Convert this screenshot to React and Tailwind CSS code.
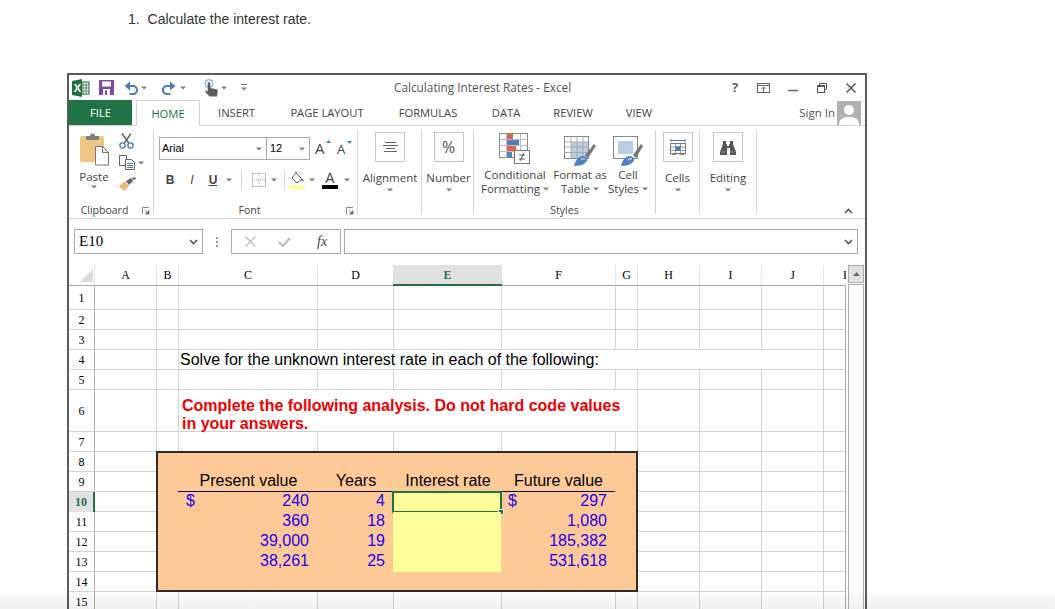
import React from 'react';

const columns = ['A', 'B', 'C', 'D', 'E', 'F', 'G', 'H', 'I', 'J'];
const rows = [1, 2, 3, 4, 5, 6, 7, 8, 9, 10, 11, 12, 13, 14, 15];

const tableRows = [
  { present: '240', years: '4', future: '297', dollar: true },
  { present: '360', years: '18', future: '1,080' },
  { present: '39,000', years: '19', future: '185,382' },
  { present: '38,261', years: '25', future: '531,618' },
];

// cells covered by the merged areas and the orange box (col 0 is A)
const isCovered = (row, col) => {
  if (row === 4 && col >= 2 && col <= 9) return true;
  if (row === 6 && col >= 2 && col <= 6) return true;
  if (row >= 8 && row <= 14 && col >= 1 && col <= 6) return true;
  return false;
};

const Caret = ({ className = '' }) => (
  <svg width="6" height="4" viewBox="0 0 6 4" className={className}>
    <path d="M0 0.500h6L3 3.500z" fill="#808080" />
  </svg>
);

const Launcher = () => (
  <svg width="8" height="8" viewBox="0 0 8 8">
    <path d="M0.500 7V0.500H7" fill="none" stroke="#888" />
    <path d="M3 3l3 3M7 3.500V7H3.500z" fill="#666" stroke="#666" strokeWidth="0.7" />
  </svg>
);

const ExcelLogo = () => (
  <svg width="18" height="18" viewBox="0 0 18 18">
    <rect x="8" y="3" width="9" height="12" fill="#fff" stroke="#1d7044" />
    <path d="M11 3v12M14 3v12M8 6h9M8 9h9M8 12h9" stroke="#1d7044" strokeWidth="0.8" />
    <path d="M0 2l10-2v18L0 16z" fill="#1d7044" />
    <text x="1.800" y="13" fontSize="11" fontWeight="700" fill="#fff" fontFamily="Liberation Sans, sans-serif">X</text>
  </svg>
);

const SaveIcon = () => (
  <svg width="15" height="15" viewBox="0 0 15 15">
    <rect width="15" height="15" fill="#7f4ea3" />
    <rect x="3" y="1.500" width="9" height="5" fill="#fff" />
    <rect x="4" y="9" width="7" height="6" fill="#fff" />
    <rect x="6" y="10.500" width="2" height="4.500" fill="#7f4ea3" />
  </svg>
);

const UndoIcon = ({ flip = false }) => (
  <svg width="15" height="14" viewBox="0 0 15 14" className={flip ? '-scale-x-100' : ''}>
    <path d="M3 5h6a4 4 0 0 1 0 8H5.500" fill="none" stroke="#4a7fb5" strokeWidth="2.200" />
    <path d="M6 0.500L0.500 5l5.500 4.500z" fill="#4a7fb5" />
  </svg>
);

const TouchIcon = () => (
  <svg width="14" height="18" viewBox="0 0 14 18">
    <circle cx="5" cy="4.500" r="3.800" fill="none" stroke="#8fb4d8" strokeWidth="1.400" />
    <path d="M3.700 4.500a1.300 1.300 0 0 1 2.600 0V9l6 1.200c1 .3 1.500 1 1.400 2l-.6 5.300H5.500L1 12.500l1-1 1.700 1.200z" fill="#5c5c5c" />
  </svg>
);

const PasteIcon = () => (
  <svg width="29" height="33" viewBox="0 0 29 33">
    <path d="M2 3h20a2 2 0 0 1 2 2v24H2a2 2 0 0 1-2-2V5a2 2 0 0 1 2-2z" fill="#ecc583" />
    <path d="M6 3h4a2.500 2.500 0 0 1 5 0h4v4H6z" fill="#7f7f7f" />
    <path d="M15.500 13.500h7l6 6v12.500h-13z" fill="#fff" stroke="#777" />
    <path d="M22.500 13.500v6h6" fill="none" stroke="#777" />
  </svg>
);

const ScissorsIcon = () => (
  <svg width="15" height="16" viewBox="0 0 15 16">
    <path d="M3 0.500l7 10M12 0.500l-7 10" stroke="#666" strokeWidth="1.500" />
    <circle cx="3.500" cy="12.500" r="2.600" fill="none" stroke="#4a7fb5" strokeWidth="1.400" />
    <circle cx="11.500" cy="12.500" r="2.600" fill="none" stroke="#4a7fb5" strokeWidth="1.400" />
  </svg>
);

const CopyIcon = () => (
  <svg width="16" height="15" viewBox="0 0 16 15">
    <path d="M0.500 0.500h7v10h-7z" fill="#fff" stroke="#666" />
    <path d="M6.500 4.500h6l3 3v7h-9z" fill="#fff" stroke="#666" />
    <path d="M8 8.500h6M8 10.500h6M8 12.500h6" stroke="#4a7fb5" />
  </svg>
);

const PainterIcon = () => (
  <svg width="17" height="14" viewBox="0 0 17 14">
    <path d="M0 9l6-5 4 5-5 5z" fill="#e9b872" />
    <path d="M7 4l5-3 2 3-4 4z" fill="#666" />
    <path d="M13 1l3-1 1 2-3 1z" fill="#666" />
  </svg>
);

const AlignIcon = () => (
  <svg width="15" height="11" viewBox="0 0 15 11">
    <path d="M2 0.500h11M0 3.500h15M3 6.500h9M1 9.500h13" stroke="#666" />
  </svg>
);

const CellsIcon = () => (
  <svg width="16" height="18" viewBox="0 0 16 18">
    <path d="M1 1v3M15 1v3M1 2.500h14" stroke="#4a7fb5" />
    <rect x="0.500" y="5.500" width="15" height="10" fill="#fff" stroke="#777" />
    <path d="M5.500 5.500v10M10.500 5.500v10M0.500 9h15M0.500 12.500h15" stroke="#999" />
    <rect x="5.500" y="8.500" width="5" height="4" fill="#3f76b5" />
    <path d="M1.500 16.500h5M9.500 16.500h5" stroke="#888" />
  </svg>
);

const BinocularsIcon = () => (
  <svg width="16" height="15" viewBox="0 0 16 15">
    <path d="M3 1h3v3h1v2h2V4h1V1h3v3l3 8v3h-6V8H7v7H0v-3l3-8z" fill="#555" />
    <path d="M1.500 12h4M10.500 12h4" stroke="#999" />
  </svg>
);

const CondFormatIcon = () => (
  <svg width="32" height="33" viewBox="0 0 32 33">
    <rect x="0.500" y="0.500" width="28" height="24" fill="#fff" stroke="#888" />
    <path d="M0.500 6.500h28M0.500 12.500h28M0.500 18.500h28M7.500 0.500v24M21.500 0.500v24" stroke="#bbb" />
    <rect x="8" y="1" width="6" height="5" fill="#e0654a" />
    <rect x="8" y="7" width="12" height="5" fill="#4f81bd" />
    <rect x="8" y="13" width="9" height="5" fill="#e0654a" />
    <rect x="8" y="19" width="5" height="5" fill="#4f81bd" />
    <rect x="15.500" y="17.500" width="15" height="13" fill="#fff" stroke="#777" />
    <path d="M20 22h6M20 26h6M25 20l-4 8" stroke="#444" strokeWidth="0.900" />
  </svg>
);

const TableStyleIcon = () => (
  <svg width="32" height="33" viewBox="0 0 32 33">
    <rect x="0.500" y="3.500" width="24" height="22" fill="#fff" stroke="#888" />
    <rect x="7" y="9" width="17" height="16" fill="#b8cce4" />
    <path d="M0.500 9h24M0.500 14h24M0.500 19.500h24M7 3.500v22M13 3.500v22M19 3.500v22" stroke="#aaa" />
    <path d="M21 22L30 11l2 2-8 12z" fill="#777" />
    <path d="M10 33c1-6 5-10 10-10 3 0 4 4 2 6-3 3-7 4-12 4z" fill="#4f81bd" />
    <path d="M17 27a3 3 0 0 1 4-1" fill="none" stroke="#fff" />
  </svg>
);

const CellStyleIcon = () => (
  <svg width="30" height="33" viewBox="0 0 30 33">
    <rect x="0.500" y="3.500" width="24" height="22" fill="#fff" stroke="#888" />
    <rect x="5" y="8" width="15" height="13" fill="#b8cce4" />
    <path d="M20 22L28 11l2 2-7 12z" fill="#777" />
    <path d="M8 33c1-6 5-10 9-10 4 0 5 4 3 6-3 3-7 4-12 4z" fill="#4f81bd" />
    <path d="M15 27a3 3 0 0 1 4-1" fill="none" stroke="#fff" />
  </svg>
);

const Chevron = () => (
  <svg width="9" height="6" viewBox="0 0 9 6">
    <path d="M1 1l3.500 3.500L8 1" fill="none" stroke="#555" strokeWidth="1.600" />
  </svg>
);

const Group = ({ label, launcher, className = '', labelClass = '', children }) => (
  <div className={`relative mt-[4px] flex h-[84px] flex-col border-r border-[#d4d4d4] ${className}`}>
    <div className="h-[72px]">{children}</div>
    <div className={`h-[12px] whitespace-nowrap text-center text-[10.5px] leading-[16px] ${labelClass}`}>{label}</div>
    {launcher && (
      <div className="absolute bottom-[-1px] right-[3px]">
        <Launcher />
      </div>
    )}
  </div>
);

const BoxGroup = ({ label, icon, className }) => (
  <Group className={className}>
    <div className="flex flex-col items-center pt-[2px]">
      <div className="flex h-[30px] w-[30px] items-center justify-center border border-[#c6c6c6]">{icon}</div>
      <div className="mt-[9px] whitespace-nowrap text-[11.5px] leading-[14px]">{label}</div>
      <Caret className="mt-[3px]" />
    </div>
  </Group>
);

const StyleColumn = ({ className, icon, top, bottom }) => (
  <div className={`flex flex-col items-center pt-[3px] ${className}`}>
    <div className="h-[33px]">{icon}</div>
    <div className="mt-[2px] whitespace-nowrap text-[11.5px] leading-[14px]">{top}</div>
    <div className="flex items-center gap-[3px] whitespace-nowrap text-[11.5px] leading-[14px]">
      {bottom}
      <Caret />
    </div>
  </div>
);

const TitleBar = () => (
  <div className="flex h-[25px] items-center text-[#555]">
    <div className="flex w-[325px] items-center">
      <div className="ml-[3px] w-[27px]"><ExcelLogo /></div>
      <div className="w-[25px]"><SaveIcon /></div>
      <div className="w-[17px]"><UndoIcon /></div>
      <Caret className="mr-[14px]" />
      <div className="w-[19px]"><UndoIcon flip /></div>
      <Caret className="mr-[18px]" />
      <div className="w-[17px]"><TouchIcon /></div>
      <Caret className="mr-[14px]" />
      <div className="flex flex-col items-center gap-[2px]">
        <div className="h-px w-[6px] bg-[#777]" />
        <Caret />
      </div>
    </div>
    <div className="text-[11.8px]">Calculating Interest Rates - Excel</div>
    <div className="ml-auto flex items-center pr-[9px]">
      <span className="w-[28px] text-center text-[13px] font-bold text-[#666]">?</span>
      <svg width="13" height="10" viewBox="0 0 13 10" className="ml-[8px]">
        <rect x="0.500" y="0.500" width="12" height="9" fill="none" stroke="#666" />
        <path d="M1 2.500h11" stroke="#666" />
        <path d="M6.500 9V4M4.500 6l2-2 2 2" fill="none" stroke="#666" />
      </svg>
      <svg width="10" height="10" viewBox="0 0 10 10" className="ml-[18px]">
        <path d="M0 7.500h10" stroke="#666" strokeWidth="1.500" />
      </svg>
      <svg width="10" height="10" viewBox="0 0 10 10" className="ml-[19px]">
        <path d="M2.500 2.500V0.500h7v6H7.500" fill="none" stroke="#555" />
        <rect x="0.500" y="2.500" width="7" height="7" fill="none" stroke="#555" />
        <path d="M0.500 3.500h7" stroke="#555" />
      </svg>
      <svg width="10" height="10" viewBox="0 0 10 10" className="ml-[19px]">
        <path d="M0.500 0.500l9 9M9.500 0.500l-9 9" stroke="#555" strokeWidth="1.500" />
      </svg>
    </div>
  </div>
);

const TabBar = () => (
  <div className="flex h-[26px] items-stretch border-b border-[#d4d4d4] text-[11.2px] text-[#444]">
    <div className="flex w-[63px] items-center justify-center bg-[#217346] pt-px text-white">FILE</div>
    <div className="z-10 ml-[4px] flex h-[26px] w-[64px] items-center justify-center border border-b-0 border-[#d4d4d4] bg-white pt-px text-[#217346]">
      HOME
    </div>
    <div className="flex w-[73px] items-center justify-center pt-px">INSERT</div>
    <div className="flex w-[108px] items-center justify-center pt-px">PAGE LAYOUT</div>
    <div className="flex w-[94px] items-center justify-center pt-px">FORMULAS</div>
    <div className="flex w-[62px] items-center justify-center pt-px">DATA</div>
    <div className="flex w-[72px] items-center justify-center pt-px">REVIEW</div>
    <div className="flex w-[60px] items-center justify-center pt-px">VIEW</div>
    <div className="ml-auto mr-[4px] flex items-center gap-[2px]">
      <span className="text-[11.5px] text-[#555]">Sign In</span>
      <svg width="24" height="24" viewBox="0 0 24 24">
        <rect width="24" height="24" fill="#b1b1b1" />
        <circle cx="12" cy="9" r="5" fill="#fff" />
        <path d="M2 24c0-6 4-8 10-8s10 2 10 8z" fill="#fff" />
      </svg>
    </div>
  </div>
);

const Ribbon = () => (
  <div className="flex h-[93px] border-b border-[#d4d4d4] text-[#444]">
    <Group label="Clipboard" launcher className="w-[85px]" labelClass="pr-[13px]">
      <div className="flex">
        <div className="ml-[6px] flex w-[38px] flex-col items-center pt-[3px]">
          <PasteIcon />
          <div className="mt-[4px] text-[11.5px] leading-[14px]">Paste</div>
          <Caret className="mt-[1px]" />
        </div>
        <div className="ml-[6px] flex flex-col items-start pt-[3px]">
          <ScissorsIcon />
          <div className="mt-[6px] flex items-center gap-[3px]">
            <CopyIcon />
            <Caret />
          </div>
          <div className="mt-[7px]"><PainterIcon /></div>
        </div>
      </div>
    </Group>

    <Group label="Font" launcher className="w-[204px]" labelClass="pr-[12px]">
      <div className="flex items-center pl-[5px] pt-[7px]">
        <div className="flex h-[23px] w-[108px] items-center justify-between border border-[#ababab] pl-[2px] pr-[4px] font-['Liberation_Sans',sans-serif] text-[11px] text-black">
          Arial
          <Caret />
        </div>
        <div className="-ml-px flex h-[23px] w-[44px] items-center justify-between border border-[#ababab] pl-[3px] pr-[4px] font-['Liberation_Sans',sans-serif] text-[11px] text-black">
          12
          <Caret />
        </div>
        <div className="relative ml-[5px] w-[16px] text-[15px] leading-none">
          A
          <svg width="5" height="3" viewBox="0 0 5 3" className="absolute right-[0px] top-[-1px]"><path d="M0 3h5L2.500 0z" fill="#4a7fb5" /></svg>
        </div>
        <div className="relative ml-[6px] mt-[2px] w-[13px] text-[13px] leading-none">
          A
          <svg width="5" height="3" viewBox="0 0 5 3" className="absolute right-[-2px] top-[-2px]"><path d="M0 0h5L2.500 3z" fill="#4a7fb5" /></svg>
        </div>
      </div>
      <div className="mt-[10px] flex h-[20px] items-center pl-[5px] font-['Liberation_Sans',sans-serif] text-[12px]">
        <span className="w-[22px] text-center font-bold">B</span>
        <span className="w-[22px] text-center italic">I</span>
        <span className="w-[20px] text-center font-bold underline">U</span>
        <div className="flex w-[12px] justify-center"><Caret /></div>
        <div className="flex w-[12px] justify-center"><div className="h-[20px] w-px bg-[#d4d4d4]" /></div>
        <div className="ml-[2px] flex w-[20px] justify-center">
          <svg width="14" height="14" viewBox="0 0 14 14">
            <rect x="0.500" y="0.500" width="13" height="13" fill="none" stroke="#888" strokeDasharray="1 1" />
            <path d="M7 0v14M0 7h14" stroke="#aaa" strokeDasharray="1 1" />
          </svg>
        </div>
        <div className="flex w-[10px] justify-center"><Caret /></div>
        <div className="flex w-[10px] justify-center"><div className="h-[20px] w-px bg-[#d4d4d4]" /></div>
        <div className="w-[16px]">
          <svg width="16" height="19" viewBox="0 0 16 19">
            <path d="M7 2l6 6-5 4-5-5z" fill="#fff" stroke="#666" />
            <path d="M7 2V0" stroke="#666" />
            <path d="M13 7l2 3-3 0z" fill="#4a7fb5" />
            <rect y="14" width="16" height="4" fill="#ffff99" />
          </svg>
        </div>
        <div className="flex w-[14px] justify-center"><Caret /></div>
        <div className="ml-[3px] flex w-[16px] flex-col items-center">
          <span className="text-[14px] leading-[14px]">A</span>
          <div className="h-[4px] w-[16px] bg-black" />
        </div>
        <div className="flex w-[18px] justify-center"><Caret /></div>
      </div>
    </Group>

    <BoxGroup label="Alignment" icon={<AlignIcon />} className="w-[64px] pl-px" />
    <BoxGroup label="Number" icon={<span className="text-[16px] text-[#555]">%</span>} className="w-[52px] pl-[2px]" />

    <Group label="Styles" className="w-[182px]">
      <div className="flex pl-[3px]">
        <StyleColumn className="w-[76px]" icon={<CondFormatIcon />} top="Conditional" bottom="Formatting" />
        <StyleColumn className="w-[54px]" icon={<TableStyleIcon />} top="Format as" bottom="Table" />
        <StyleColumn className="w-[42px]" icon={<CellStyleIcon />} top="Cell" bottom="Styles" />
      </div>
    </Group>

    <BoxGroup label="Cells" icon={<CellsIcon />} className="w-[44px]" />
    <BoxGroup label="Editing" icon={<BinocularsIcon />} className="w-[57px]" />

    <div className="flex flex-1 items-end justify-end pb-[4px] pr-[12px]">
      <div className="rotate-180"><Chevron /></div>
    </div>
  </div>
);

const FormulaBar = () => (
  <div className="flex h-[46px] items-start pl-[5px] pt-[10px]">
    <div className="flex h-[25px] w-[129px] items-center justify-between border border-[#ababab] pl-[4px] pr-[4px] font-['Liberation_Serif',serif] text-[15px] text-black">
      E10
      <Chevron />
    </div>
    <div className="flex h-[25px] w-[28px] flex-col items-center justify-center gap-[2px]">
      <div className="h-[2px] w-[2px] bg-[#999]" />
      <div className="h-[2px] w-[2px] bg-[#999]" />
      <div className="h-[2px] w-[2px] bg-[#999]" />
    </div>
    <div className="flex h-[25px] w-[110px] items-center border border-[#ababab]">
      <svg width="11" height="11" viewBox="0 0 11 11" className="ml-[13px]">
        <path d="M0.500 0.500l10 10M10.500 0.500l-10 10" stroke="#bbb" strokeWidth="1.300" />
      </svg>
      <svg width="13" height="10" viewBox="0 0 13 10" className="ml-[22px]">
        <path d="M1 5l4 4 7-8" fill="none" stroke="#bbb" strokeWidth="2" />
      </svg>
      <span className="ml-[26px] font-['Liberation_Serif',serif] text-[14px] italic text-[#444]">fx</span>
    </div>
    <div className="ml-[3px] flex h-[25px] w-[514px] items-center justify-end border border-[#ababab] pr-[4px]">
      <Chevron />
    </div>
  </div>
);

const OrangeBox = () => (
  <div className="z-10 col-start-3 col-end-9 row-start-9 row-end-16 -ml-px -mt-px flex flex-col border-2 border-[#2b2b2b] bg-[#fdca97] pl-[20px] pt-[18px] font-['Liberation_Sans',sans-serif] text-[16px] leading-[18px]">
    <div className="flex h-[21px] w-[437px] border-b border-black pl-px pt-px text-center">
      <div className="w-[139px] shrink-0">Present value</div>
      <div className="w-[76px] shrink-0">Years</div>
      <div className="w-[108px] shrink-0">Interest rate</div>
      <div className="w-[113px] shrink-0">Future value</div>
    </div>
    {tableRows.map((row, i) => (
      <div key={row.present} className="flex h-[20px] text-[#2200ee]">
        <div className="flex w-[139px] justify-between px-[8px]">
          <span>{row.dollar ? '$' : ''}</span>
          <span>{row.present}</span>
        </div>
        <div className="w-[76px] pr-[8px] text-right">{row.years}</div>
        <div className="relative w-[108px] bg-[#ffff99]">
          {i === 0 && (
            <div className="absolute -inset-px border-2 border-[#217346]">
              <div className="absolute bottom-[-4px] right-[-4px] h-[6px] w-[6px] border border-white bg-[#217346]" />
            </div>
          )}
        </div>
        <div className="flex w-[114px] justify-between pl-[7px] pr-[8px]">
          <span>{row.dollar ? '$' : ''}</span>
          <span>{row.future}</span>
        </div>
      </div>
    ))}
  </div>
);

const Sheet = () => (
  <div className="flex">
    <div className="grid grid-cols-[26px_62px_22px_139px_76px_108px_114px_22px_62px_62px_62px_22px] grid-rows-[21px_24px_20px_20px_20px_20px_42px_20px_20px_20px_20px_20px_20px_20px_20px_20px] font-['Liberation_Serif',serif] text-[12px] text-black">
      <div className="flex items-center justify-end border-b border-r border-b-[#ababab] border-r-[#e4e4e4] pr-[1px]">
        <svg width="13" height="13" viewBox="0 0 13 13"><path d="M13 0v13H0z" fill="#dcdcdc" /></svg>
      </div>
      {columns.map((col) => (
        <div
          key={col}
          className={col === 'E'
            ? '-ml-px flex items-center justify-center border-b-2 border-[#217346] bg-[#e1e1e1] font-bold text-[#217346]'
            : 'flex items-center justify-center border-b border-r border-b-[#ababab] border-r-[#e4e4e4]'}
        >
          {col}
        </div>
      ))}
      <div className="overflow-hidden border-b border-[#ababab] pl-[19px] leading-[21px]">K</div>

      <div className="z-10 col-start-4 col-end-12 row-start-5 flex items-center border-b border-r border-[#d4d4d4] bg-white pl-px font-['Liberation_Sans',sans-serif] text-[16px]">
        Solve for the unknown interest rate in each of the following:
      </div>
      <div className="z-10 col-start-4 col-end-9 row-start-7 border-b border-r border-[#d4d4d4] pl-[3px] pr-[8px] pt-[7px] font-['Liberation_Sans',sans-serif] text-[16px] font-bold leading-[18px] text-[#f00000]">
        Complete the following analysis. Do not hard code values in your answers.
      </div>
      <OrangeBox />

      {rows.map((row) => (
        <React.Fragment key={row}>
          <div
            className={row === 10
              ? 'flex items-center justify-center border-r-2 border-[#217346] bg-[#e1e1e1] font-bold text-[#217346]'
              : 'flex items-center justify-center border-b border-r border-b-[#d4d4d4] border-r-[#ababab]'}
          >
            {row}
          </div>
          {[...Array(11).keys()].filter((col) => !isCovered(row, col)).map((col) => (
            <div
              key={col}
              className={col === 10
                ? 'border-b border-r border-b-[#d4d4d4] border-r-[#ababab]'
                : 'border-b border-r border-[#d4d4d4]'}
            />
          ))}
        </React.Fragment>
      ))}
    </div>

    <div className="ml-[2px] flex w-[16px] flex-col">
      <div className="flex h-[18px] items-center justify-center border border-[#ababab] bg-[#e1e1e1]">
        <svg width="7" height="4" viewBox="0 0 7 4"><path d="M0 4h7L3.500 0z" fill="#666" /></svg>
      </div>
      <div className="mt-[1px] h-[400px] border border-[#ababab] bg-white" />
    </div>
  </div>
);

export default function App() {
  return (
    <div className="relative h-[609px] w-[1055px] overflow-hidden bg-white font-['Open_Sans',sans-serif]">
      <div className="h-[73px] pl-[128px] pt-[10px] font-['Liberation_Sans',sans-serif] text-[14px] leading-[18px] text-[#333]">
        <span className="mr-[4px]">1.</span> Calculate the interest rate.
      </div>
      <div className="ml-[67px] h-[560px] w-[800px] overflow-hidden border-2 border-[#5a5a5a]">
        <TitleBar />
        <TabBar />
        <Ribbon />
        <FormulaBar />
        <Sheet />
      </div>
      {/* soft fade the page has along its lower edge */}
      <div className="pointer-events-none absolute inset-x-0 bottom-0 z-20 h-[20px] bg-linear-to-b from-transparent to-black/[0.06]" />
    </div>
  );
}
